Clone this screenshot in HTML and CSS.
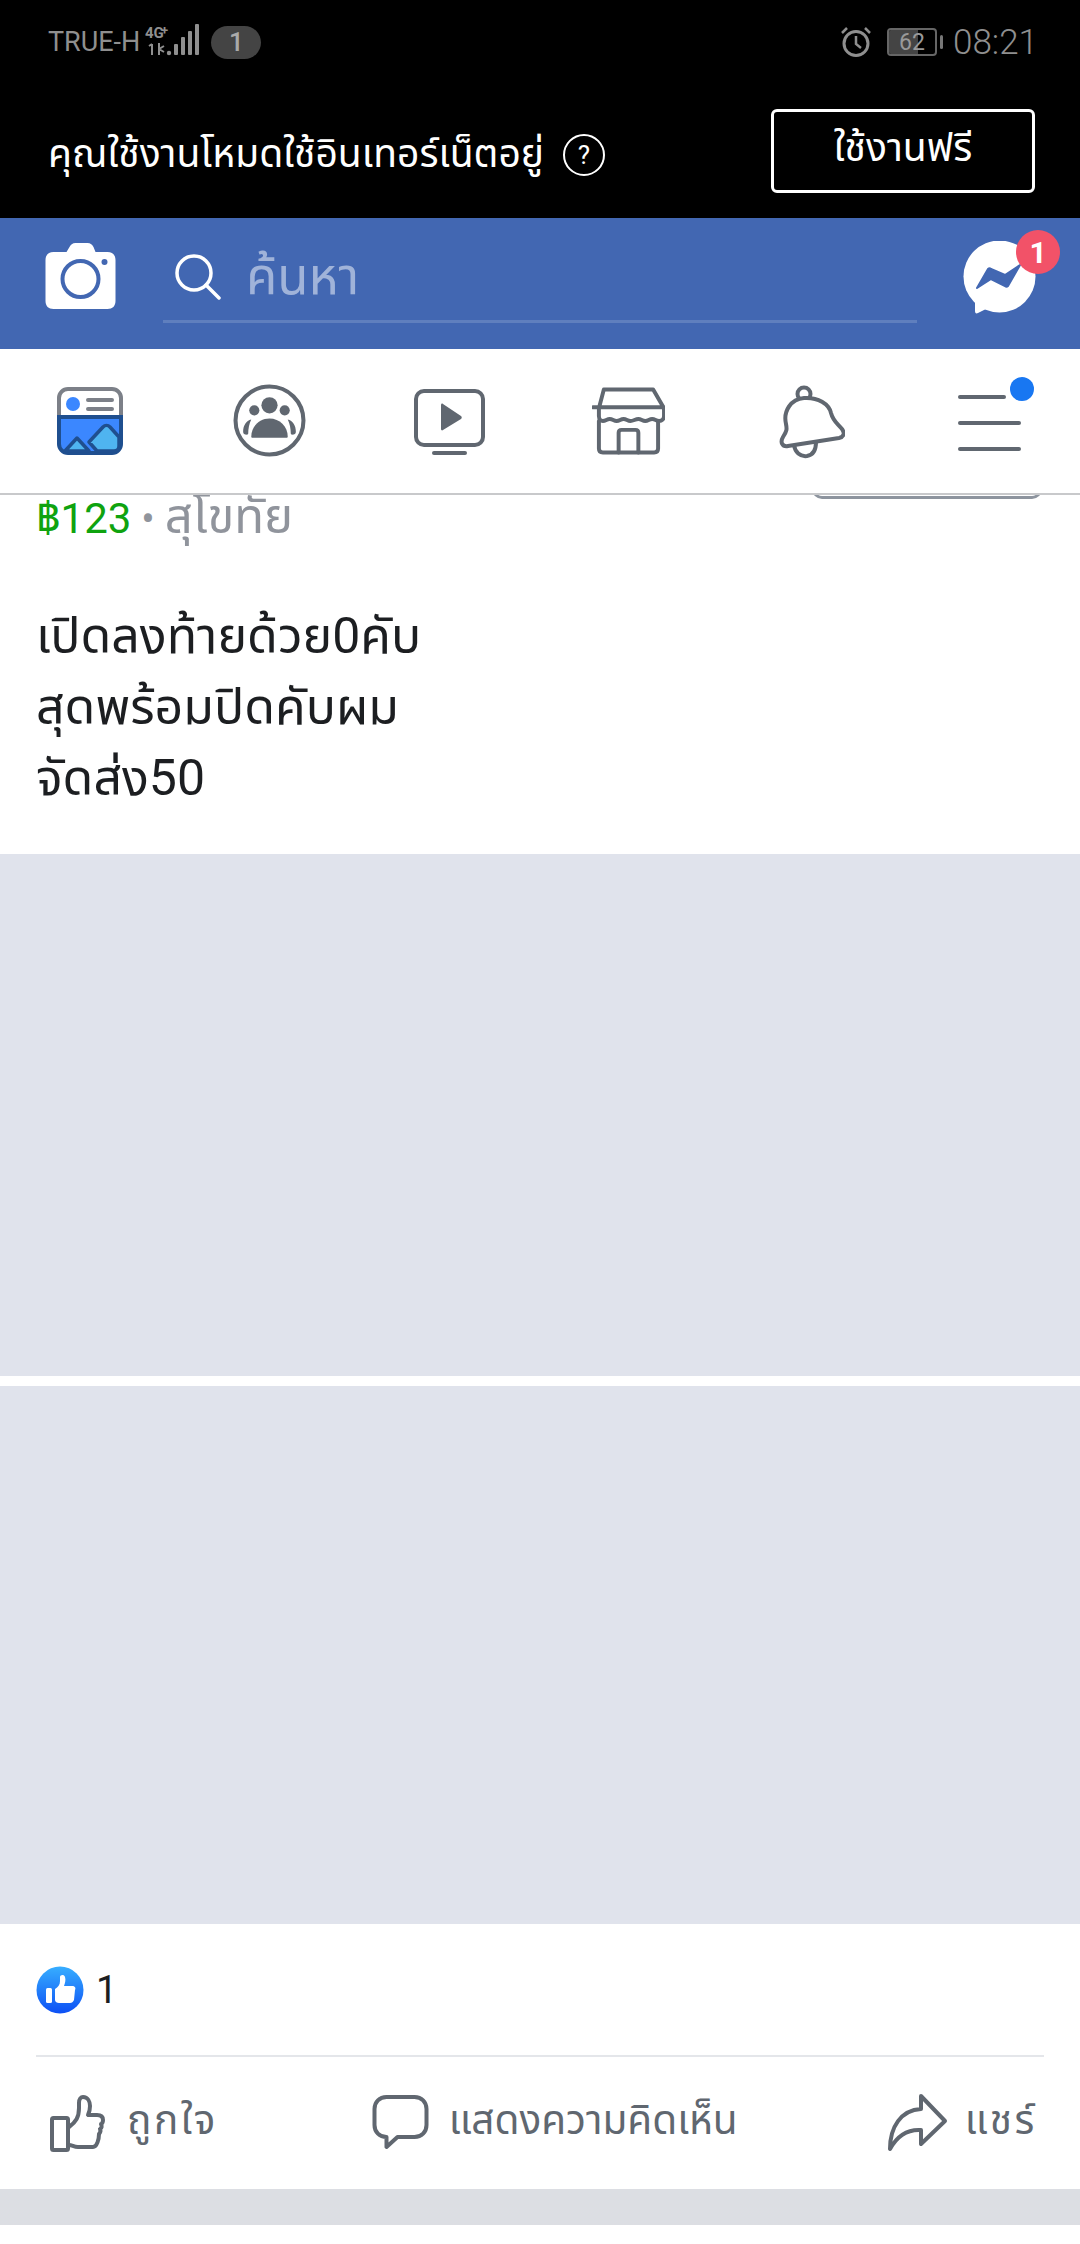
FILE: index.html
```html
<!DOCTYPE html>
<html lang="th">
<head>
<meta charset="utf-8">
<title>Facebook</title>
<link rel="stylesheet" href="styles.css">
</head>
<body>
<div class="page">
  <header class="top-black">
    <div class="statusbar">
      <div class="status-left">
        <span class="carrier">TRUE-H</span>
        <svg class="signal" width="58" height="34" viewBox="0 0 58 34">
          <text x="0" y="14" class="sig-text">4G</text>
          <text x="16" y="11" class="sig-plus">+</text>
          <path d="M7 20l-3 2M7 20v11M14 19v12M14 25l5-3M14 25l5 3" stroke="#8f8f8f" stroke-width="2" fill="none"/>
          <circle cx="24" cy="29" r="2.2" fill="#8f8f8f"/>
          <rect x="29" y="20" width="4" height="11" rx="1" fill="#8f8f8f"/>
          <rect x="36" y="13" width="4" height="18" rx="1" fill="#8f8f8f"/>
          <rect x="43" y="7" width="4" height="24" rx="1" fill="#8f8f8f"/>
          <rect x="50" y="0" width="4" height="31" rx="1" fill="#8f8f8f"/>
        </svg>
        <span class="sim-pill">1</span>
      </div>
      <div class="status-right">
        <svg width="32" height="32" viewBox="0 0 30 32" fill="none" stroke="#8f8f8f" stroke-width="3">
          <circle cx="15" cy="17.500" r="12"/>
          <path d="M15 10v8l5 4M1 7l5-5M29 7l-5-5" stroke-width="2.500"/>
        </svg>
        <div class="battery">
          <div class="battery-body"><span class="battery-fill"></span><span class="battery-num">62</span></div>
          <span class="battery-tip"></span>
        </div>
        <span class="clock">08:21</span>
      </div>
    </div>
    <div class="mode-row">
      <div class="mode-left">
        <span class="mode-text">คุณใช้งานโหมดใช้อินเทอร์เน็ตอยู่</span>
        <span class="help">?</span>
      </div>
      <div class="free-btn">ใช้งานฟรี</div>
    </div>
  </header>

  <div class="searchbar">
    <svg class="camera" width="73" height="66" viewBox="0 0 70 66">
      <path d="M8 9h13l3-5c1-2 3-4 6-4h12c3 0 5 2 6 4l2 5h12c5 0 8 3 8 8v41c0 5-3 8-8 8H8c-5 0-8-3-8-8V17c0-5 3-8 8-8z" fill="#fff"/>
      <circle cx="35" cy="36" r="18" fill="none" stroke="#4267b2" stroke-width="4"/>
      <circle cx="59" cy="19" r="3" fill="#4267b2"/>
    </svg>
    <div class="search-field">
      <svg width="48" height="46" viewBox="0 0 46 46" fill="none" stroke="#fff" stroke-width="3.500">
        <circle cx="19" cy="19" r="17"/>
        <path d="M31 31l13 13" stroke-linecap="round"/>
      </svg>
      <span class="placeholder">ค้นหา</span>
    </div>
    <div class="messenger">
      <svg width="73" height="73" viewBox="0 0 73 73">
        <circle cx="36.500" cy="35.500" r="36" fill="#fff"/>
        <path d="M12 58v12c0 2 1 3 3 2l12-6z" fill="#fff"/>
        <path d="M14 47l11-19c1-1 2-1 3 0l14 6 15-10-12 21c-1 1-2 1-3 0l-14-7z" fill="#4267b2" stroke="#4267b2" stroke-width="2" stroke-linejoin="round"/>
      </svg>
      <span class="msg-badge">1</span>
    </div>
  </div>

  <nav class="tabs">
    <svg class="tab-feed" width="68" height="68" viewBox="0 0 66 68">
      <path d="M2 30V11c0-5 4-9 9-9h44c5 0 9 4 9 9v19z" fill="#fff" stroke="#7c8088" stroke-width="4"/>
      <path d="M2 30h62v27c0 5-4 9-9 9H11c-5 0-9-4-9-9z" fill="#3b87ff" stroke="#1f4f8f" stroke-width="4"/>
      <circle cx="16" cy="17" r="7" fill="#3b87ff"/>
      <path d="M31 13h24M31 22h24" stroke="#7c8088" stroke-width="4" stroke-linecap="round"/>
      <path d="M8 64l12-13 12 13zM32 55l14-15c2-2 5-2 7 0l9 10v9c0 3-2 5-5 5H40z" fill="#4fb4f0" stroke="#1f4f8f" stroke-width="3.500" stroke-linejoin="round"/>
    </svg>
    <svg class="tab-groups" width="73" height="73" viewBox="0 0 72 72">
      <circle cx="36" cy="36" r="33.500" fill="none" stroke="#606770" stroke-width="4"/>
      <circle cx="36" cy="21" r="8" fill="#606770"/>
      <circle cx="21" cy="26" r="5" fill="#606770"/>
      <circle cx="51" cy="26" r="5" fill="#606770"/>
      <path d="M18 52c0-10 8-18 18-18s18 8 18 18c0 1-1 1-2 1H20c-1 0-2 0-2-1z" fill="#606770"/>
      <path d="M14 50c-3 0-4-1-4-3 0-6 3-11 8-12-2 4-3 9-3 14zM58 50c3 0 4-1 4-3 0-6-3-11-8-12 2 4 3 9 3 14z" fill="#606770"/>
    </svg>
    <svg class="tab-video" width="71" height="66" viewBox="0 0 71 66">
      <rect x="2" y="2" width="67" height="54" rx="8" fill="none" stroke="#606770" stroke-width="4"/>
      <path d="M27 16c0-1 1-2 2-1l18 12c1 1 1 2 0 3L29 41c-1 1-2 0-2-1z" fill="#606770"/>
      <rect x="18" y="62" width="35" height="4" rx="2" fill="#606770"/>
    </svg>
    <svg class="tab-store" width="73" height="68" viewBox="0 0 74 68" fill="none" stroke="#606770" stroke-width="4" stroke-linejoin="round" stroke-linecap="round">
      <path d="M12 2h50l11 19v8c0 3-2 5-5 5-3 0-4-2-7-2s-4 2-7 2-4-2-7-2-5 2-8 2-4-2-7-2-4 2-7 2-4-2-7-2-4 2-7 2c-2 0-4-2-4-5v-8zM1 20h72"/>
      <path d="M7 34v28c0 3 2 4 4 4h52c2 0 4-1 4-4V34"/>
      <path d="M27 66V46c0-2 1-3 3-3h14c2 0 3 1 3 3v20"/>
    </svg>
    <svg class="tab-bell" width="66" height="76" viewBox="0 0 66 76" fill="none" stroke="#606770" stroke-width="4" stroke-linejoin="round">
      <circle cx="25" cy="9" r="6.500"/>
      <path d="M25 13c-13 1-21 13-18 26 1 5 1 7-3 13-3 5-1 10 5 9l51-8c5-1 6-5 3-9-5-6-9-8-11-16-2-9-13-16-27-15z" fill="#fff"/>
      <path d="M15 60c1 7 6 12 13 11 6-1 9-6 9-14"/>
    </svg>
    <div class="tab-menu">
      <span class="menu-line short"></span>
      <span class="menu-line"></span>
      <span class="menu-line"></span>
      <span class="menu-dot"></span>
    </div>
  </nav>

  <main class="feed">
    <div class="price-row">
      <div class="price-text"><span class="price">฿123</span><span class="sep">•</span><span class="place">สุโขทัย</span></div>
      <span class="msg-btn"></span>
    </div>
    <div class="post-text">
      <p>เปิดลงท้ายด้วย0คับ</p>
      <p>สุดพร้อมปิดคับผม</p>
      <p>จัดส่ง50</p>
    </div>
    <div class="photo first"></div>
    <div class="photo second"></div>
    <div class="likes">
      <svg width="48" height="48" viewBox="0 0 48 48">
        <defs><linearGradient id="lg" x1="0" y1="0" x2="0" y2="1"><stop offset="0" stop-color="#37aeff"/><stop offset="1" stop-color="#0d50f5"/></linearGradient></defs>
        <circle cx="24" cy="24" r="23.500" fill="url(#lg)"/>
        <rect x="10" y="22" width="6" height="15" rx="1.500" fill="#fff"/>
        <path d="M19 23c3-2 5-4 5-8v-4c0-2 4-3 5 0 1 3 0 6-1 9h8c3 0 4 2 3 4l-1 10c-1 2-2 3-4 3H23c-2 0-4-1-4-3z" fill="#fff"/>
      </svg>
      <span class="like-count">1</span>
    </div>
    <div class="actions">
      <div class="action act-like">
        <svg width="60" height="57" viewBox="0 0 56 57" fill="none" stroke="#606770" stroke-width="4" stroke-linejoin="round" stroke-linecap="round">
          <rect x="2" y="23" width="16" height="32" rx="1.500"/>
          <path d="M19 32c7-5 10-10 10-19V8c0-4 2-6 4-6 5 0 7 5 7 9 0 4-1 7-2 9h9c4 0 6 2 6 5 0 2-1 4-2 4 1 2 1 4-1 5 1 2 0 4-1 5 0 5-2 13-6 13H28c-4 0-6-2-9-2"/>
        </svg>
        <span class="label wide">ถูกใจ</span>
      </div>
      <div class="action act-comment">
        <svg width="57" height="56" viewBox="0 0 56 56" fill="none" stroke="#606770" stroke-width="4" stroke-linejoin="round">
          <path d="M14 2h28c7 0 12 5 12 12v16c0 7-5 12-12 12H25L14 52v-10c-7 0-12-5-12-12V14C2 7 7 2 14 2z"/>
        </svg>
        <span class="label">แสดงความคิดเห็น</span>
      </div>
      <div class="action act-share">
        <svg width="62" height="58" viewBox="0 0 60 58" fill="none" stroke="#606770" stroke-width="4" stroke-linejoin="round" stroke-linecap="round">
          <path d="M33 2l24 25-24 23V36C18 35 8 44 2 55c0-22 11-39 31-40z"/>
        </svg>
        <span class="label wide">แชร์</span>
      </div>
    </div>
    <div class="gap-band"></div>
  </main>
</div>
</body>
</html>
```
FILE: styles.css
```css
* { box-sizing: border-box; }
html, body { margin: 0; padding: 0; }
body { background: #fff; font-family: "Roboto", "Noto Sans", "Noto Sans Thai", "Liberation Sans", sans-serif; }
.page { width: 1080px; height: 2244px; overflow: hidden; display: flex; flex-direction: column; }

.top-black { background: #000; height: 218px; padding: 0 45px 0 48px; display: flex; flex-direction: column; }
.statusbar { height: 84px; padding-top: 24px; margin-right: -3px; display: flex; justify-content: space-between; align-items: flex-start; color: #8f8f8f; }
.status-left, .status-right { display: flex; align-items: center; height: 36px; }
.carrier { font-size: 27px; }
.signal { margin-left: 5px; margin-top: -2px; }
.sig-text { font-family: "Roboto", sans-serif; font-size: 15px; font-weight: 700; fill: #8f8f8f; }
.sig-plus { font-family: "Roboto", sans-serif; font-size: 13px; font-weight: 700; fill: #8f8f8f; }
.sim-pill { width: 50px; height: 33px; margin-left: 8px; border-radius: 17px; background: #444; color: #aaa; font-size: 26px; font-weight: 500; display: flex; align-items: center; justify-content: center; }
.battery { display: flex; align-items: center; margin-left: 15px; }
.battery-body { position: relative; width: 50px; height: 28px; border: 2px solid #666; border-radius: 4px; overflow: hidden; display: flex; align-items: center; justify-content: center; }
.battery-fill { position: absolute; left: 0; top: 0; bottom: 0; width: 62%; background: #444; }
.battery-num { position: relative; font-size: 23px; color: #999; }
.battery-tip { width: 3px; height: 14px; margin-left: 3px; background: #777; border-radius: 2px; }
.clock { font-size: 35px; font-weight: 300; margin-left: 10px; }

.mode-row { display: flex; justify-content: space-between; align-items: flex-start; padding-top: 25px; }
.mode-left { display: flex; align-items: center; height: 82px; padding-top: 10px; }
.mode-text { color: #fff; font-size: 39px; }
.help { width: 42px; height: 42px; margin-left: 19px; border: 2px solid #fff; border-radius: 50%; color: #fff; font-size: 26px; display: flex; align-items: center; justify-content: center; }
.free-btn { width: 264px; height: 84px; padding-bottom: 4px; border: 3px solid #fff; border-radius: 6px; color: #fff; font-size: 39px; display: flex; align-items: center; justify-content: center; }

.searchbar { height: 131px; background: #4267b2; position: relative; display: flex; align-items: flex-start; padding: 25px 0 0 44px; }
.search-field { width: 754px; height: 80px; margin-left: 46px; border-bottom: 3px solid #5f7fbe; display: flex; align-items: flex-start; padding: 11px 0 0 11px; }
.placeholder { color: #a0b3d9; font-size: 51px; margin-left: 24px; line-height: 46px; }
.messenger { position: relative; margin-left: 46px; margin-top: -2px; }
.msg-badge { position: absolute; left: 53px; top: -11px; width: 44px; height: 44px; border-radius: 50%; background: #f25268; color: #fff; font-size: 30px; font-weight: 700; display: flex; align-items: center; justify-content: center; }

.tabs { height: 146px; background: #fff; border-bottom: 2px solid #c8c9cb; display: flex; align-items: flex-start; position: relative; z-index: 1; }
.tab-feed { margin: 38px 0 0 56px; }
.tab-groups { margin: 35px 0 0 109px; }
.tab-video { margin: 40px 0 0 108px; }
.tab-store { margin: 38px 0 0 107px; }
.tab-bell { margin: 36px 0 0 114px; }
.tab-menu { position: relative; width: 63px; margin: 46px 0 0 113px; display: flex; flex-direction: column; gap: 22px; }
.menu-line { height: 4px; background: #606770; border-radius: 2px; }
.menu-line.short { width: 48px; }
.menu-dot { position: absolute; right: -13px; top: -18px; width: 24px; height: 24px; border-radius: 50%; background: #1877f2; }

.feed { flex: 1; display: flex; flex-direction: column; overflow: hidden; }
.price-row { height: 42px; margin-top: -6px; padding: 0 38px 0 36px; display: flex; justify-content: space-between; align-items: flex-start; }
.price-text { font-size: 42px; line-height: 56px; white-space: nowrap; display: flex; align-items: baseline; }
.price { color: #0fa30f; }
.sep { color: #90949c; font-size: 40px; margin: 0 10px; }
.place { color: #90949c; font-size: 49px; }
.msg-btn { width: 230px; height: 10px; border: 3px solid #8d949e; border-top: 0; border-radius: 0 0 12px 12px; }
.post-text { padding: 70px 36px 0; height: 323px; color: #1c1e21; font-size: 50px; line-height: 71px; }
.post-text p { margin: 0; }
.photo { background: #e0e3ec; }
.photo.first { height: 522px; }
.photo.second { height: 538px; margin-top: 10px; }
.likes { height: 133px; display: flex; align-items: center; gap: 12px; margin: 0 36px 0 36px; border-bottom: 2px solid #e4e6ea; }
.like-count { font-size: 38px; color: #1c1e21; }
.actions { height: 132px; display: flex; align-items: center; color: #606770; font-size: 40.5px; }
.action { display: flex; align-items: center; }
.label { padding-bottom: 4px; }
.wide { letter-spacing: 2.5px; }
.act-like { margin-left: 48px; gap: 19px; }
.act-comment { margin-left: 154px; gap: 20px; }
.act-share { margin-left: 149px; gap: 16px; }
.gap-band { height: 36px; background: #dcdee3; }
```
